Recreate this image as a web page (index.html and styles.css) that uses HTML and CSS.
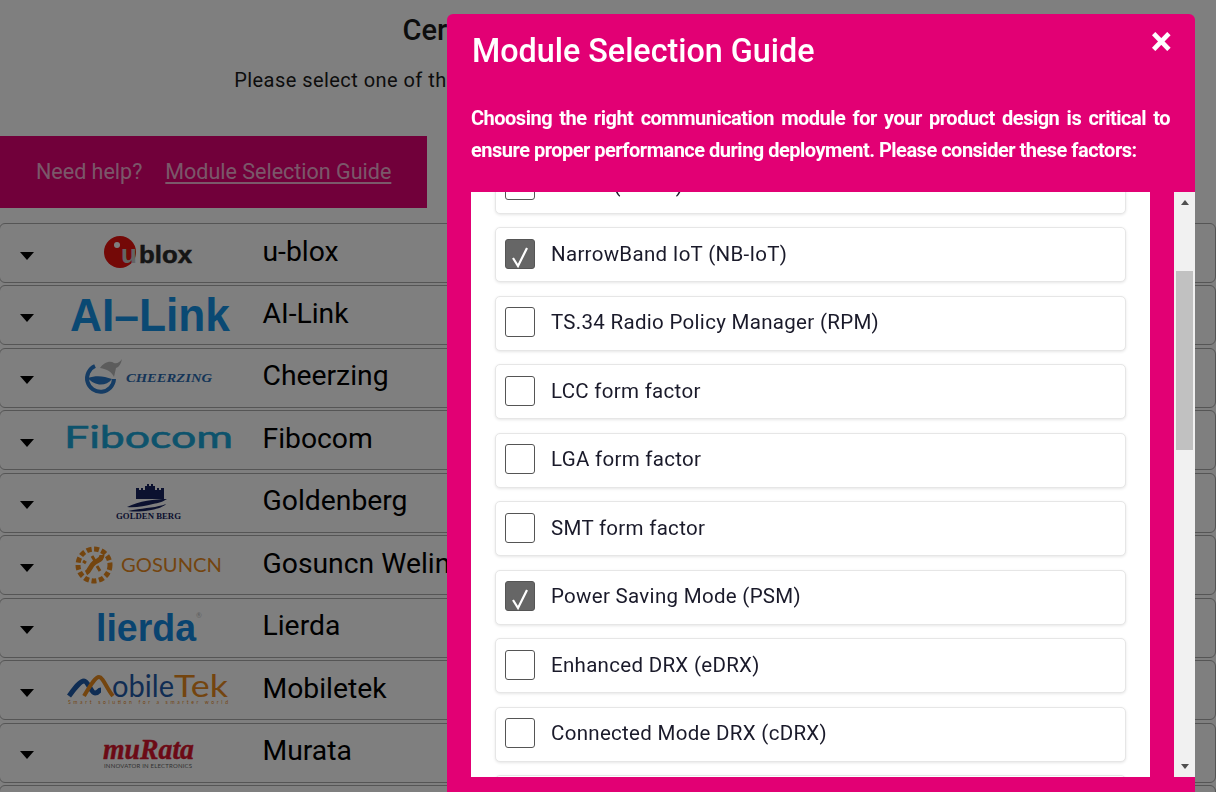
FILE: index.html
```html
<!DOCTYPE html>
<html lang="en">
<head>
<meta charset="utf-8">
<title>Certified Modules</title>
<link rel="stylesheet" href="styles.css">
</head>
<body>
<main class="page">
  <h1 class="page-title">Certified Modules for Our Cloud</h1>
  <p class="page-sub">Please select one of the certified modules below for its supported features here.</p>
  <div class="help-bar">
    <span class="help-q">Need help?</span>
    <a class="help-link" href="#">Module Selection Guide</a>
  </div>
  <ul class="vendors">
    <li class="vendor">
      <span class="caret"></span>
      <svg class="logo" viewBox="0 0 204 60">
        <circle cx="80" cy="29" r="16" fill="#e8120f"/>
        <circle cx="77" cy="22" r="3" fill="#fff"/>
        <text class="lg-sans" x="81" y="40" font-size="26" fill="#c8c8c8">u</text>
        <text class="lg-sans" x="99" y="40" font-size="24" fill="#2a2a2a" stroke="#2a2a2a" stroke-width=".5" textLength="53" lengthAdjust="spacingAndGlyphs">blox</text>
      </svg>
      <span class="vendor-name">u-blox</span>
    </li>
    <li class="vendor">
      <span class="caret"></span>
      <svg class="logo" viewBox="0 0 204 60">
        <text class="lg-sans" x="30" y="46" font-size="47" fill="#1492e6" textLength="160" lengthAdjust="spacingAndGlyphs">AI–Link</text>
      </svg>
      <span class="vendor-name">AI-Link</span>
    </li>
    <li class="vendor">
      <span class="caret"></span>
      <svg class="logo" viewBox="0 0 204 60">
        <path d="M55 18a13.5 13.5 0 1 0 19 13" fill="none" stroke="#2a78c8" stroke-width="4"/>
        <path d="M48 30c8-3 16-2 24 1-6 8-18 7-24-1z" fill="#2a78c8"/>
        <path d="M60 20c3-5 10-8 14-5 3 1 6-1 8-4-1 5-3 8-6 9l-2 9c-2-5-7-8-14-9z" fill="#b8b8b8"/>
        <text class="lg-serif" x="86" y="34" font-size="13" fill="#2a6ab0" textLength="86" lengthAdjust="spacingAndGlyphs">CHEERZING</text>
      </svg>
      <span class="vendor-name">Cheerzing</span>
    </li>
    <li class="vendor">
      <span class="caret"></span>
      <svg class="logo" viewBox="0 0 204 60">
        <text class="lg-wide" x="24" y="38" font-size="31" fill="#1aa6d8" stroke="#1aa6d8" stroke-width=".6" textLength="169" lengthAdjust="spacingAndGlyphs">Fibocom</text>
      </svg>
      <span class="vendor-name">Fibocom</span>
    </li>
    <li class="vendor">
      <span class="caret"></span>
      <svg class="logo" viewBox="0 0 204 60">
        <path d="M96 26v-11h3v2h2v-2h2v2h2v-4h2v-2h2v2h2v-2h2v2h2v4h2v-2h2v2h2v-2h3v11z" fill="#16235e"/>
        <path d="M87 34c12-6 28-8 40-8-5 3-8 4-14 5-8 2-18 4-26 3zM88 38c14-3 28-3 38-7-4 5-24 9-38 7z" fill="#16235e"/>
        <text class="lg-slab" x="76" y="46" font-size="8" fill="#16235e" textLength="65" lengthAdjust="spacingAndGlyphs">GOLDEN BERG</text>
      </svg>
      <span class="vendor-name">Goldenberg</span>
    </li>
    <li class="vendor">
      <span class="caret"></span>
      <svg class="logo" viewBox="0 0 204 60">
        <circle cx="54" cy="30" r="16" fill="none" stroke="#e88a1e" stroke-width="5" stroke-dasharray="5 2.5"/>
        <path d="M46 38c4-2 4-7 8-10s8-3 8-8" fill="none" stroke="#e88a1e" stroke-width="5"/>
        <path d="M52 21l3 5M60 36l-3-5M43 26l3 2" fill="none" stroke="#e88a1e" stroke-width="3"/>
        <text class="lg-wide" x="81" y="37" font-size="20" fill="#e88a1e" textLength="101" lengthAdjust="spacingAndGlyphs">GOSUNCN</text>
      </svg>
      <span class="vendor-name">Gosuncn Welink</span>
    </li>
    <li class="vendor">
      <span class="caret"></span>
      <svg class="logo" viewBox="0 0 204 60">
        <text class="lg-sans" x="56" y="43" font-size="38" fill="#1288e0" textLength="100" lengthAdjust="spacingAndGlyphs">lierda</text>
        <text class="lg-thin" x="156" y="20" font-size="7" fill="#bbb">®</text>
      </svg>
      <span class="vendor-name">Lierda</span>
    </li>
    <li class="vendor">
      <span class="caret"></span>
      <svg class="logo" viewBox="0 0 204 60">
        <path d="M29 36c6-8 11-15 15-15s7 12 11 12c4 0 3-3 6-3" fill="none" stroke="#1f5aa8" stroke-width="5"/>
        <path d="M44 36c6-10 11-19 15-19 4 0 8 12 14 19" fill="none" stroke="#e88a1e" stroke-width="4"/>
        <text class="lg-thin" x="72" y="37" font-size="31" fill="#1f5aa8" textLength="62" lengthAdjust="spacingAndGlyphs">obile</text>
        <text class="lg-thin" x="134" y="37" font-size="31" fill="#e88a1e" textLength="54" lengthAdjust="spacingAndGlyphs">Tek</text>
        <text class="lg-thin" x="28" y="44" font-size="5" fill="#e88a1e" textLength="160">Smart solution for a smarter world</text>
      </svg>
      <span class="vendor-name">Mobiletek</span>
    </li>
    <li class="vendor">
      <span class="caret"></span>
      <svg class="logo" viewBox="0 0 204 60">
        <text class="lg-serif" x="63" y="36" font-size="30" fill="#d8142c" stroke="#d8142c" stroke-width=".5" textLength="91" lengthAdjust="spacingAndGlyphs">muRata</text>
        <text class="lg-thin" x="64" y="45" font-size="6" fill="#666" textLength="88">INNOVATOR IN ELECTRONICS</text>
      </svg>
      <span class="vendor-name">Murata</span>
    </li>
    <li class="vendor">
      <span class="caret"></span>
    </li>
  </ul>
</main>

<div class="backdrop"></div>

<section class="modal">
  <header class="modal-head">
    <div class="modal-title-row">
      <h2 class="modal-title">Module Selection Guide</h2>
      <span class="modal-close">×</span>
    </div>
    <p class="modal-intro">Choosing the right communication module for your product design is critical to ensure proper performance during deployment. Please consider these factors:</p>
  </header>
  <div class="modal-body">
    <div class="list-view">
      <ul class="factor-list">
        <li class="factor"><span class="box"></span><span>LTE-M (eMTC)</span></li>
        <li class="factor"><span class="box is-on"><svg class="tick" viewBox="0 0 30 30"><path d="M8 19l5 8 9-18" fill="none" stroke="#fff" stroke-width="2.2"/></svg></span><span>NarrowBand IoT (NB-IoT)</span></li>
        <li class="factor"><span class="box"></span><span>TS.34 Radio Policy Manager (RPM)</span></li>
        <li class="factor"><span class="box"></span><span>LCC form factor</span></li>
        <li class="factor"><span class="box"></span><span>LGA form factor</span></li>
        <li class="factor"><span class="box"></span><span>SMT form factor</span></li>
        <li class="factor"><span class="box is-on"><svg class="tick" viewBox="0 0 30 30"><path d="M8 19l5 8 9-18" fill="none" stroke="#fff" stroke-width="2.2"/></svg></span><span>Power Saving Mode (PSM)</span></li>
        <li class="factor"><span class="box"></span><span>Enhanced DRX (eDRX)</span></li>
        <li class="factor"><span class="box"></span><span>Connected Mode DRX (cDRX)</span></li>
        <li class="factor"><span class="box"></span><span>Coverage Enhancement</span></li>
      </ul>
    </div>
    <div class="scrollbar">
      <span class="arrow-up"></span>
      <span class="thumb"></span>
      <span class="arrow-down"></span>
    </div>
  </div>
</section>
</body>
</html>
```
FILE: styles.css
```css
* { box-sizing: border-box; }
html, body { margin: 0; height: 792px; overflow: hidden; }
body { font-family: Roboto, "Liberation Sans", sans-serif; color: #1a1a1a; background: #fff; }
ul { list-style: none; margin: 0; padding: 0; }

.page { width: 1216px; height: 792px; overflow: hidden; }
.page-title { margin: 0; padding-top: 13px; height: 66px; font-size: 29px; line-height: 34px; font-weight: 500; text-align: center; white-space: nowrap; }
.page-sub { margin: 0; height: 73px; font-size: 20px; line-height: 28px; text-align: center; white-space: nowrap; letter-spacing: .45px; }
.help-bar { width: 427px; height: 72px; margin-top: -3px; padding: 0 0 2px 36px; display: flex; align-items: center; gap: 23px; background: #e20074; color: rgba(255,255,255,.7); font-size: 21.5px; }
.help-link { color: inherit; text-decoration: underline; text-underline-offset: 3px; }

.vendors { margin: 15px 0 0 -1px; }
.vendor { height: 60px; margin-bottom: 2.45px; display: flex; align-items: center; border: 1px solid #aaa; border-radius: 6px; }
.caret { width: 0; height: 0; margin: 5px 0 0 20px; border-style: solid; border-width: 8px 7.5px 0; border-color: #000 transparent transparent; flex: none; }
.logo { width: 204px; height: 60px; margin-left: 6px; flex: none; }
.vendor-name { margin-left: 18.5px; margin-top: -4px; font-size: 28.3px; color: #000; white-space: nowrap; }
.lg-sans { font-family: "Liberation Sans", sans-serif; font-weight: 700; }
.lg-serif { font-family: "Liberation Serif", serif; font-weight: 700; font-style: italic; }
.lg-slab { font-family: "Liberation Serif", serif; font-weight: 700; }
.lg-wide { font-family: Lato, sans-serif; font-weight: 400; }
.lg-thin { font-family: Lato, sans-serif; font-weight: 400; }

.backdrop { position: fixed; inset: 0; background: rgba(0,0,0,.5); }

.modal { position: absolute; left: 447px; top: 14px; width: 748px; height: 778px; background: #e20074; border-radius: 6px 6px 0 0; color: #fff; overflow: hidden; }
.modal-head { height: 178px; padding: 17px 25px 0 24px; }
.modal-title-row { display: flex; justify-content: space-between; align-items: flex-start; }
.modal-title { margin: 0 0 0 1px; font-size: 32.3px; line-height: 40px; font-weight: 500; }
.modal-close { font-size: 40px; line-height: 22px; font-weight: 700; margin-right: -2px; }
.modal-intro { margin: 31px 0 0; font-size: 20px; line-height: 32px; font-weight: 700; letter-spacing: -.5px; text-align: justify; }

.modal-body { height: 585px; display: flex; padding-left: 24px; }
.list-view { width: 679px; overflow: hidden; background: #fff; padding: 0 24px; }
.factor-list { margin-top: -33.5px; }
.factor { height: 55px; margin-bottom: 13.5px; padding: 0 9px 2px; display: flex; align-items: center; gap: 16px; background: #fff; border: 1px solid #e6e6e6; border-radius: 5px; box-shadow: 0 1px 3px rgba(0,0,0,.1); color: #1a1a2a; font-size: 20.5px; letter-spacing: .3px; white-space: nowrap; }
.box { width: 30px; height: 30px; flex: none; border: 1px solid #555; border-radius: 3px; background: #fff; }
.box.is-on { background: #666; }
.tick { display: block; width: 30px; height: 30px; margin: -1px; }

.scrollbar { width: 21px; margin-left: 24px; background: #f1f1f1; display: flex; flex-direction: column; align-items: center; }
.arrow-up { width: 0; height: 0; margin-top: 8px; border-style: solid; border-width: 0 4.5px 5px; border-color: transparent transparent #505050; }
.thumb { width: 17px; height: 179px; margin-top: 66px; background: #c1c1c1; }
.arrow-down { width: 0; height: 0; margin-top: auto; margin-bottom: 8px; border-style: solid; border-width: 5px 4.5px 0; border-color: #505050 transparent transparent; }
```
